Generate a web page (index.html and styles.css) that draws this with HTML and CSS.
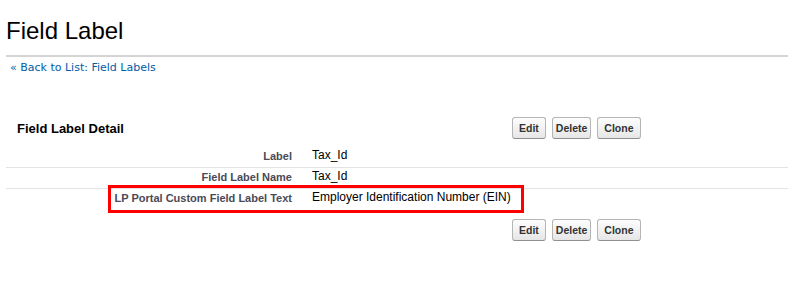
FILE: index.html
```html
<!DOCTYPE html>
<html lang="en">
<head>
    <meta charset="UTF-8">
    <meta name="viewport" content="width=device-width, initial-scale=1.0">
    <title>Field Label</title>
    <link rel="stylesheet" href="styles.css">
</head>
<body>
    <div class="page-head">
        <h1 class="page-title">Field Label</h1>
    </div>
    <div class="back-link"><a href="#">&laquo; Back to List: Field Labels</a></div>

    <div class="detail">
        <div class="detail-bar">
            <h2 class="detail-title">Field Label Detail</h2>
            <div class="btns">
                <button class="btn">Edit</button>
                <button class="btn btn-del">Delete</button>
                <button class="btn">Clone</button>
            </div>
        </div>

        <div class="fields">
            <div class="field">
                <div class="field-label">Label</div>
                <div class="field-value">Tax_Id</div>
            </div>
            <div class="field">
                <div class="field-label">Field Label Name</div>
                <div class="field-value">Tax_Id</div>
            </div>
            <div class="field field-last">
                <div class="field-label">LP Portal Custom Field Label Text</div>
                <div class="field-value">Employer Identification Number (EIN)</div>
                <span class="mark"></span>
            </div>
        </div>

        <div class="detail-bar detail-foot">
            <div></div>
            <div class="btns">
                <button class="btn">Edit</button>
                <button class="btn btn-del">Delete</button>
                <button class="btn">Clone</button>
            </div>
        </div>
    </div>
</body>
</html>
```

FILE: styles.css
```css
html, body {
    margin: 0;
    padding: 0;
    background: #fff;
    color: #000;
    font-family: Arial, 'Liberation Sans', sans-serif;
}

/* Page header */
.page-head {
    margin-left: 6px;
    padding: 17px 0 10px;
    border-bottom: 2px solid #d4d4d4;
}
.page-title {
    margin: 0;
    font-size: 24px;
    line-height: 28px;
    font-weight: normal;
}

.back-link {
    margin: 4px 0 0 10px;
    font-family: Verdana, 'DejaVu Sans', sans-serif;
    font-size: 11px;
    line-height: 13px;
}
.back-link a {
    color: #015ba7;
    text-decoration: none;
}

/* Detail block */
.detail {
    margin: 43px 0 0 6px;
}

.detail-bar {
    display: grid;
    grid-template-columns: 506px auto;
    align-items: center;
    height: 22px;
}
.detail-title {
    margin: 0;
    padding-left: 11px;
    font-size: 13px;
    font-weight: bold;
}

.btns {
    display: flex;
    gap: 6px;
}
.btn {
    height: 22px;
    padding: 0 6px;
    border: 1px solid #b5b5b5;
    border-bottom-color: #8f8f8f;
    border-radius: 3px;
    background: linear-gradient(#fdfdfd, #e6e6e6);
    color: #333;
    font-family: Arial, 'Liberation Sans', sans-serif;
    font-size: 10.5px;
    font-weight: bold;
    cursor: pointer;
}
.btn-del {
    padding: 0 3px;
}

.fields {
    margin-top: 8px;
}
.field {
    position: relative;
    display: grid;
    grid-template-columns: 296px auto;
    height: 20px;
    border-bottom: 1px solid #e3e3e7;
}
.field-last {
    border-bottom: none;
}
.field-label {
    padding: 2px 10px 0 0;
    text-align: right;
    color: #4a4a56;
    font-size: 11px;
    font-weight: bold;
    line-height: 14px;
}
.field-value {
    padding: 1px 0 0 10px;
    font-size: 12px;
    line-height: 14px;
}

/* highlight drawn over the last row */
.mark {
    position: absolute;
    left: 102px;
    top: -4px;
    width: 416px;
    height: 28px;
    box-sizing: border-box;
    border: 3px solid #f00;
}

.detail-foot {
    margin-top: 10px;
}
```
